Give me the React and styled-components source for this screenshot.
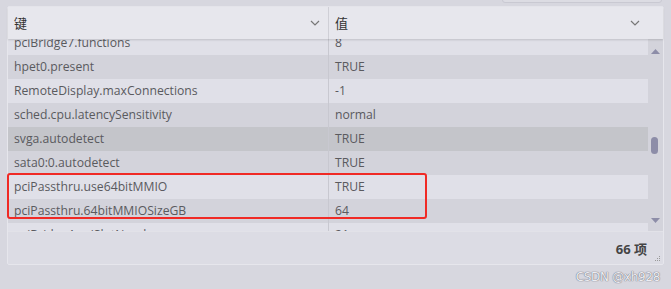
import React from "react";
import styled, { createGlobalStyle } from "styled-components";

const GlobalStyle = createGlobalStyle`
  html, body {
    margin: 0;
    padding: 0;
    background: #d7d7df;
    font-family: "Open Sans", "Noto Sans CJK SC", sans-serif;
  }
`;

const rows = [
  ["pciBridge7.functions", "8"],
  ["hpet0.present", "TRUE"],
  ["RemoteDisplay.maxConnections", "-1"],
  ["sched.cpu.latencySensitivity", "normal"],
  ["svga.autodetect", "TRUE"],
  ["sata0:0.autodetect", "TRUE"],
  ["pciPassthru.use64bitMMIO", "TRUE"],
  ["pciPassthru.64bitMMIOSizeGB", "64"],
  ["pciBridge4.pciSlotNumber", "21"],
];

const Page = styled.div`
  width: 671px;
  height: 289px;
  padding: 6px 7px 0 7px;
  box-sizing: border-box;
  position: relative;
  overflow: hidden;
`;

const TopEdge = styled.div`
  position: absolute;
  left: 502px;
  top: -6px;
  width: 158px;
  height: 7px;
  border: 1px solid #c9c9d2;
  border-radius: 3px;
  background: #dcdce3;
`;

const Grid = styled.div`
  width: 657px;
  height: 259px;
  box-sizing: border-box;
  border: 1px solid #e6e6ec;
  border-radius: 2px;
  display: flex;
  flex-direction: column;
  background: #dcdce4;
  position: relative;
`;

const Header = styled.div`
  height: 32px;
  display: grid;
  grid-template-columns: 320px 1fr;
  background: #e7e7ed;
  box-shadow: 0 1px 2px rgba(0, 0, 0, 0.15);
  position: relative;
  z-index: 2;
`;

const HeadCell = styled.div`
  display: flex;
  align-items: center;
  justify-content: space-between;
  padding: 0 ${(p) => p.$pr}px 0 6px;
  font-size: 13px;
  color: #333;
  border-left: ${(p) => (p.$divider ? "1px solid #cfcfd6" : "none")};
`;

const Body = styled.div`
  height: 194px;
  display: flex;
  overflow: hidden;
  position: relative;
`;

const List = styled.div`
  flex: 1;
  margin-top: -8px;
`;

const Row = styled.div`
  height: 24px;
  display: grid;
  grid-template-columns: 320px 1fr;
  background: ${(p) => (p.$hover ? "#c4c5ca" : p.$odd ? "#d3d3db" : "#e0e0e8")};
`;

const Cell = styled.div`
  display: flex;
  align-items: center;
  padding-left: 6px;
  font-size: 12.2px;
  color: #5a5a5e;
  white-space: nowrap;
  border-left: ${(p) => (p.$divider ? "1px solid #c8c8d0" : "none")};
`;

const Scrollbar = styled.div`
  width: 15px;
  background: #d3d3db;
  display: flex;
  flex-direction: column;
  align-items: center;
  justify-content: space-between;
  padding: 10px 0 8px;
  box-sizing: border-box;
  position: relative;
`;

const Thumb = styled.div`
  position: absolute;
  left: 3px;
  top: 98px;
  width: 7px;
  height: 17px;
  border-radius: 4px;
  background: #8d8da8;
`;

const Footer = styled.div`
  height: 32px;
  display: flex;
  align-items: center;
  justify-content: flex-end;
  padding-right: 16px;
  font-size: 13px;
  font-weight: 700;
  color: #444;
  border-top: 1px solid #e2e2e8;
  position: relative;
`;

const Grip = styled.svg`
  position: absolute;
  right: 2px;
  bottom: 2px;
`;

const Highlight = styled.div`
  position: absolute;
  left: 7px;
  top: 173px;
  width: 420px;
  height: 46px;
  box-sizing: border-box;
  border: 2px solid #f02a25;
  border-radius: 3px;
  pointer-events: none;
  z-index: 3;
`;

const Watermark = styled.div`
  position: absolute;
  right: 11px;
  bottom: 5px;
  font-size: 12px;
  font-family: "DejaVu Sans", sans-serif;
  color: #ededf2;
  text-shadow: 0 0 1px #6e6e7a, 0 0 1px #6e6e7a;
  letter-spacing: -0.3px;
`;

const Chevron = () => (
  <svg width="10" height="6" viewBox="0 0 10 6">
    <polyline points="1,1 5,5 9,1" fill="none" stroke="#777" strokeWidth="1.2" />
  </svg>
);

const Arrow = ({ down }) => (
  <svg width="9" height="5" viewBox="0 0 9 5">
    <polygon points={down ? "0,0 9,0 4.5,5" : "0,5 9,5 4.5,0"} fill="#8d8da8" />
  </svg>
);

export default function App() {
  return (
    <>
      <GlobalStyle />
      <Page>
        <TopEdge />
        <Grid>
          <Header>
            <HeadCell $pr={8}>
              键
              <Chevron />
            </HeadCell>
            <HeadCell $divider $pr={23}>
              值
              <Chevron />
            </HeadCell>
          </Header>
          <Body>
            <List>
              {rows.map(([k, v], i) => (
                <Row key={k} $odd={i % 2 === 1} $hover={i === 4}>
                  <Cell>{k}</Cell>
                  <Cell $divider>{v}</Cell>
                </Row>
              ))}
            </List>
            <Scrollbar>
              <Arrow />
              <Thumb />
              <Arrow down />
            </Scrollbar>
          </Body>
          <Footer>
            66 项
            <Grip width="7" height="7" viewBox="0 0 7 7">
              <rect x="5" y="1" width="1" height="1" fill="#999" />
              <rect x="3" y="3" width="1" height="1" fill="#999" />
              <rect x="5" y="3" width="1" height="1" fill="#999" />
              <rect x="1" y="5" width="1" height="1" fill="#999" />
              <rect x="3" y="5" width="1" height="1" fill="#999" />
              <rect x="5" y="5" width="1" height="1" fill="#999" />
            </Grip>
          </Footer>
        </Grid>
        <Highlight />
        <Watermark>CSDN @xh928</Watermark>
      </Page>
    </>
  );
}
